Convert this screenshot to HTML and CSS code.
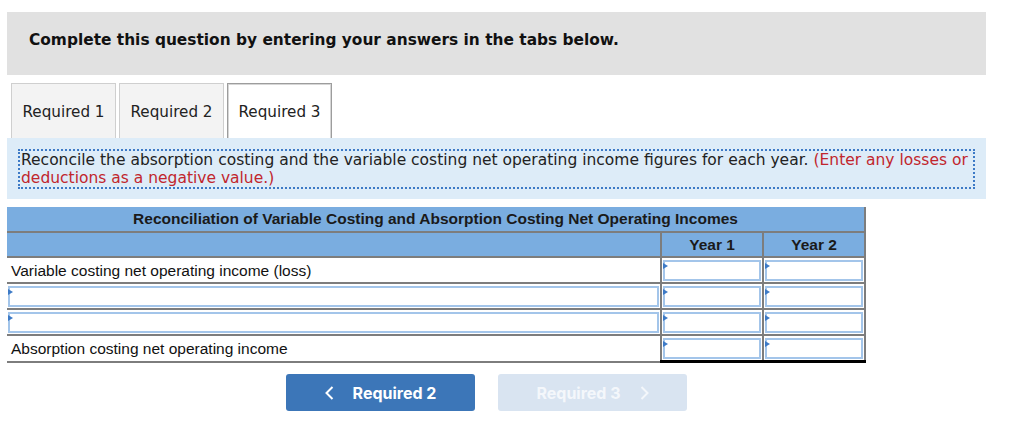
FILE: index.html
```html
<!DOCTYPE html>
<html>
<head>
<meta charset="utf-8">
<link rel="stylesheet" href="styles.css">
</head>
<body>
<div class="page">
  <div class="banner">Complete this question by entering your answers in the tabs below.</div>
  <div class="tabs">
    <div class="tab">Required 1</div>
    <div class="tab">Required 2</div>
    <div class="tab active">Required 3</div>
  </div>
  <div class="instr">
    <div class="instr-inner"><span class="line">Reconcile the absorption costing and the variable costing net operating income figures for each year. <span class="red">(Enter any losses or</span></span><br><span class="red">deductions as a negative value.)</span></div>
  </div>
  <table class="rec">
    <colgroup><col class="c-label"><col class="c-year"><col class="c-year"></colgroup>
    <tr class="title"><td colspan="3">Reconciliation of Variable Costing and Absorption Costing Net Operating Incomes</td></tr>
    <tr class="head"><td></td><td>Year 1</td><td>Year 2</td></tr>
    <tr><td class="label">Variable costing net operating income (loss)</td><td class="in"><div class="box"></div></td><td class="in"><div class="box"></div></td></tr>
    <tr><td class="in"><div class="box"></div></td><td class="in"><div class="box"></div></td><td class="in"><div class="box"></div></td></tr>
    <tr><td class="in"><div class="box"></div></td><td class="in"><div class="box"></div></td><td class="in"><div class="box"></div></td></tr>
    <tr class="total"><td class="label">Absorption costing net operating income</td><td class="in tot"><div class="box"></div></td><td class="in tot"><div class="box"></div></td></tr>
  </table>
  <div class="nav">
    <div class="btn prev"><svg class="chev" width="9" height="14" viewBox="0 0 9 14"><polyline points="7.5,1 1.5,7 7.5,13" fill="none" stroke="#fff" stroke-width="2"/></svg><span>Required 2</span></div>
    <div class="btn next"><span>Required 3</span><svg class="chev" width="9" height="14" viewBox="0 0 9 14"><polyline points="1.5,1 7.5,7 1.5,13" fill="none" stroke="#f4f7fb" stroke-width="2"/></svg></div>
  </div>
</div>
</body>
</html>
```
FILE: styles.css
```css
* { box-sizing: border-box; }
html, body { margin: 0; padding: 0; background: #fff; }
.page { padding: 12px 0 0 7px; width: 986px; }
.banner {
  height: 63px; background: #e1e1e1; padding: 0 0 7px 22px;
  display: flex; align-items: center;
  font-family: "DejaVu Sans", Verdana, sans-serif; font-weight: bold; font-size: 15.4px; color: #111;
}
.tabs { display: flex; gap: 3px; margin: 8px 0 0 4px; height: 55px; }
.tab {
  width: 105px; height: 55px; background: #f3f3f3; border: 1px solid #cfcfcf; border-bottom: none;
  display: flex; align-items: center; justify-content: center; padding-top: 2px;
  font-family: "DejaVu Sans", Verdana, sans-serif; font-size: 15.2px; color: #222;
}
.tab.active { background: #fff; border: 1px solid #9d9d9d; border-bottom: none; box-shadow: inset 1px 1px 0 #d6d6d6, inset -1px 0 0 #d6d6d6; }
.instr { background: #ddecf8; height: 61px; padding: 11px 11px 10px 11px; }
.instr-inner {
  border: 2px dotted #3d7ac6; height: 40px; padding: 0 0 0 1px;
  font-family: "DejaVu Sans", Verdana, sans-serif; font-size: 15.5px; line-height: 18px; color: #222;
  white-space: nowrap; overflow: hidden;
}
.red { color: #c1262d; }
.rec {
  margin-top: 8px; width: 858px; border-collapse: collapse; table-layout: fixed;
  font-family: "Liberation Sans", Arial, sans-serif; font-size: 15.5px; color: #111;
}
.c-label { width: 654px; }
.c-year { width: 102px; }
.rec td { height: 25px; padding: 0; border-bottom: 2px solid #7d7d7d; }
.rec td + td { border-left: 2px solid #7d7d7d; }
.rec tr.title td { background: #7aade0; font-weight: bold; text-align: center; border-right: 2px solid #7d7d7d; color: #1a1a1a; }
.rec tr.head td { background: #7aade0; font-weight: bold; text-align: center; color: #1a1a1a; }
.rec tr td:last-child { border-right: 2px solid #7d7d7d; }
.rec td.label { padding-left: 4px; padding-top: 1px; }
.rec td.in { padding: 2px 1px 1px 1px; }
.box {
  position: relative; height: 21px; border: 2px solid #a3c5ea; background: #fff;
}
.box::before {
  content: ""; position: absolute; left: -2px; top: 1px;
  border-left: 5px solid #3d7ac6; border-top: 3px solid transparent; border-bottom: 3px solid transparent;
}
.rec td.tot { border-top: 2px solid #111; border-bottom: 3px solid #000 !important; }
.nav { display: flex; gap: 23px; margin: 11px 0 0 279px; }
.btn {
  width: 189px; height: 37px; border-radius: 3px;
  display: flex; align-items: center; justify-content: center; gap: 19px;
  font-family: Inter, Roboto, sans-serif; font-weight: 700; font-size: 16px; color: #fff;
}
.btn.prev { background: #3c76b8; }
.btn.next { background: #d9e4f1; color: #f4f7fb; }
.chev { display: block; }
```
